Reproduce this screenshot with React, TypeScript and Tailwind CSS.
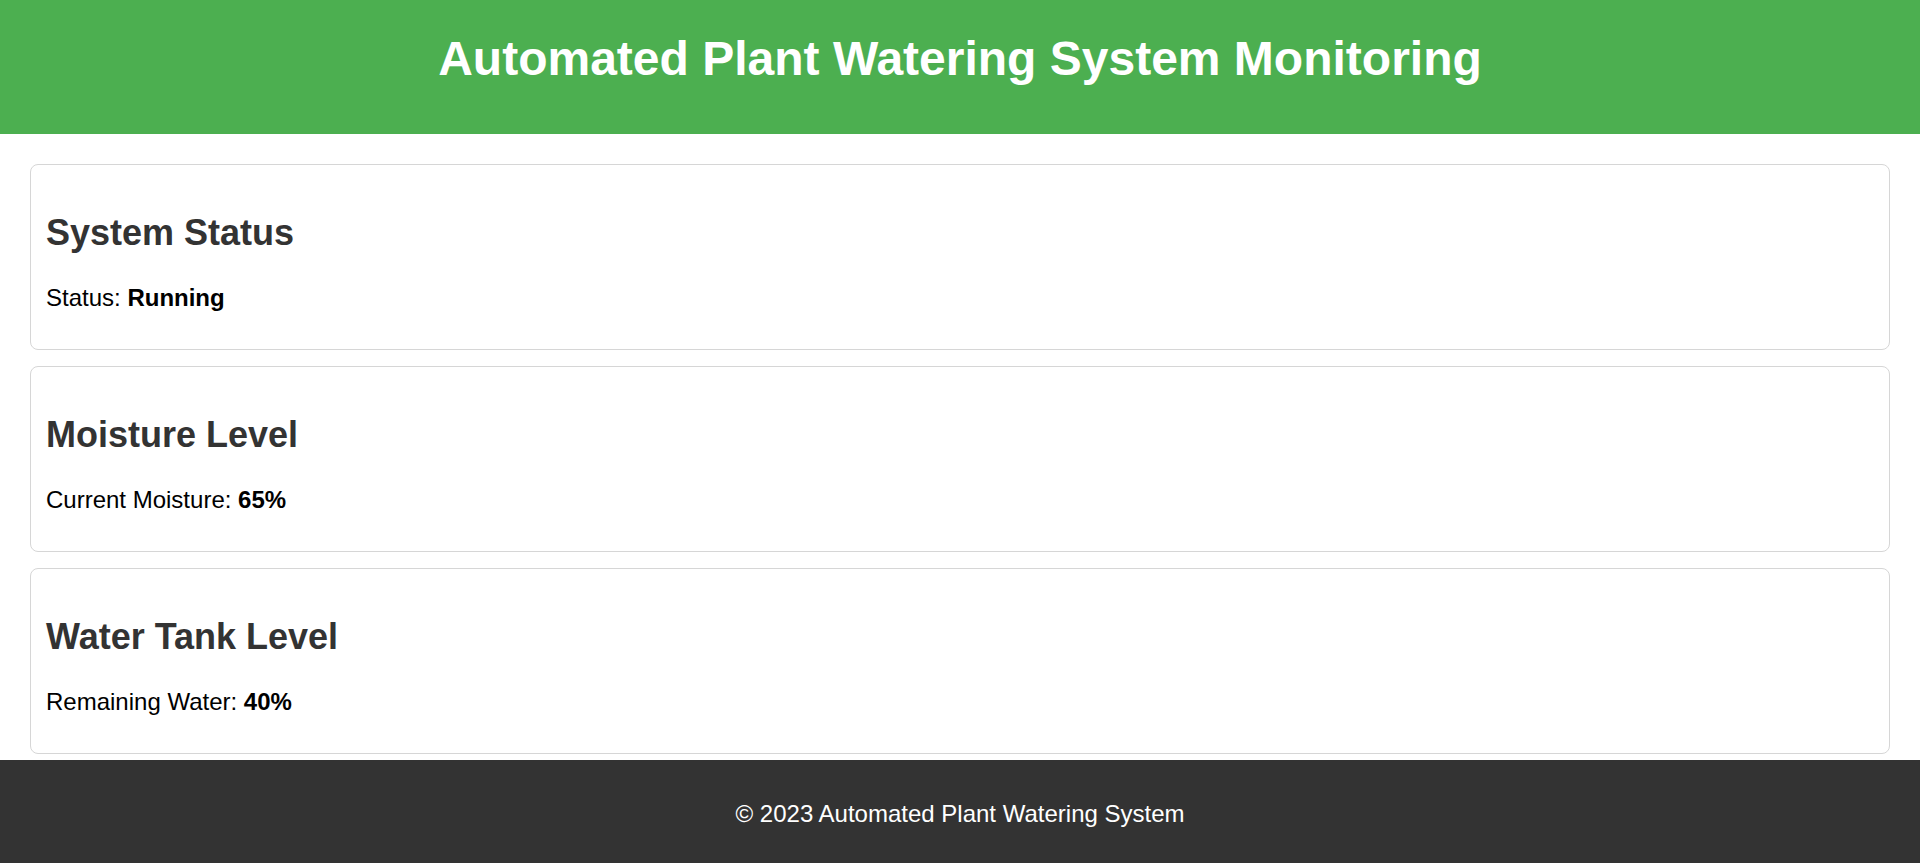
const sections = [
  { title: "System Status", label: "Status:", value: "Running" },
  { title: "Moisture Level", label: "Current Moisture:", value: "65%" },
  { title: "Water Tank Level", label: "Remaining Water:", value: "40%" },
];

export default function App() {
  return (
    <div className="min-h-screen flex flex-col bg-white font-['Liberation_Sans',Arial,sans-serif] text-black">
      <header className="h-[134px] bg-[#4caf50] pt-[31px] text-center text-white">
        <h1 className="text-[48px] leading-[55px] font-bold">
          Automated Plant Watering System Monitoring
        </h1>
      </header>

      <main className="flex flex-col gap-[16px] px-[30px] pt-[30px]">
        {sections.map((s) => (
          <section
            key={s.title}
            className="h-[186px] border border-[#d6d6d6] rounded-[8px] p-[15px]"
          >
            <h2 className="mt-[32px] text-[36px] leading-[41px] font-bold text-[#333]">
              {s.title}
            </h2>
            <p className="mt-[31px] text-[24px] leading-[28px]">
              {s.label} <strong className="font-bold">{s.value}</strong>
            </p>
          </section>
        ))}
      </main>

      <footer className="mt-[6px] h-[103px] bg-[#333] pt-[40px] text-center text-white">
        <p className="text-[24px] leading-[28px]">© 2023 Automated Plant Watering System</p>
      </footer>
    </div>
  );
}
